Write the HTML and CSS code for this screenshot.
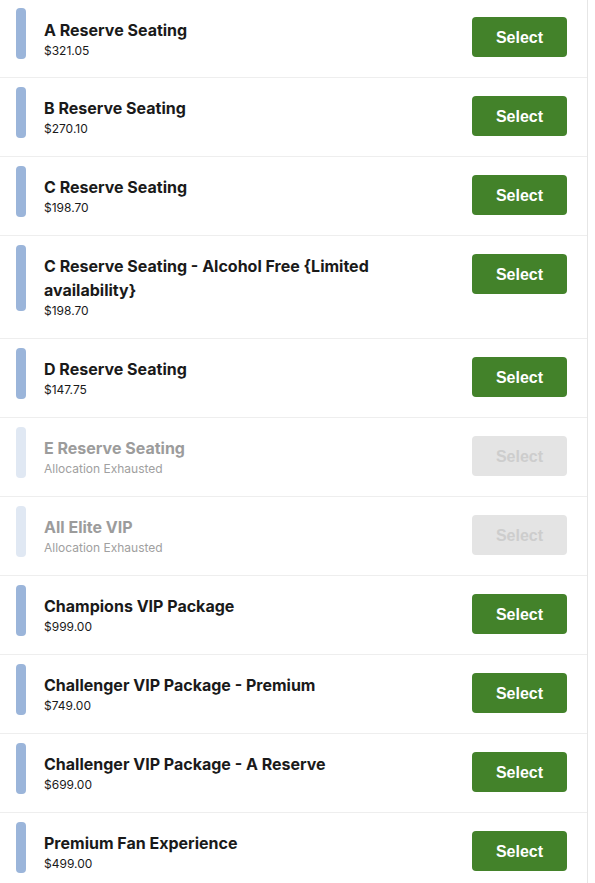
FILE: index.html
```html
<!DOCTYPE html>
<html>
<head>
<meta charset="utf-8">
<link rel="stylesheet" href="styles.css">
</head>
<body>
<div class="list">
  <div class="row">
    <div class="bar"></div>
    <div class="info"><div class="title">A Reserve Seating</div><div class="sub">$321.05</div></div>
    <button class="btn">Select</button>
  </div>
  <div class="row">
    <div class="bar"></div>
    <div class="info"><div class="title">B Reserve Seating</div><div class="sub">$270.10</div></div>
    <button class="btn">Select</button>
  </div>
  <div class="row">
    <div class="bar"></div>
    <div class="info"><div class="title">C Reserve Seating</div><div class="sub">$198.70</div></div>
    <button class="btn">Select</button>
  </div>
  <div class="row">
    <div class="bar bar-tall"></div>
    <div class="info"><div class="title">C Reserve Seating - Alcohol Free {Limited availability}</div><div class="sub">$198.70</div></div>
    <button class="btn">Select</button>
  </div>
  <div class="row">
    <div class="bar"></div>
    <div class="info"><div class="title">D Reserve Seating</div><div class="sub">$147.75</div></div>
    <button class="btn">Select</button>
  </div>
  <div class="row disabled">
    <div class="bar"></div>
    <div class="info"><div class="title">E Reserve Seating</div><div class="sub">Allocation Exhausted</div></div>
    <button class="btn" disabled>Select</button>
  </div>
  <div class="row disabled">
    <div class="bar"></div>
    <div class="info"><div class="title">All Elite VIP</div><div class="sub">Allocation Exhausted</div></div>
    <button class="btn" disabled>Select</button>
  </div>
  <div class="row">
    <div class="bar"></div>
    <div class="info"><div class="title">Champions VIP Package</div><div class="sub">$999.00</div></div>
    <button class="btn">Select</button>
  </div>
  <div class="row">
    <div class="bar"></div>
    <div class="info"><div class="title">Challenger VIP Package - Premium</div><div class="sub">$749.00</div></div>
    <button class="btn">Select</button>
  </div>
  <div class="row">
    <div class="bar"></div>
    <div class="info"><div class="title">Challenger VIP Package - A Reserve</div><div class="sub">$699.00</div></div>
    <button class="btn">Select</button>
  </div>
  <div class="row">
    <div class="bar"></div>
    <div class="info"><div class="title">Premium Fan Experience</div><div class="sub">$499.00</div></div>
    <button class="btn">Select</button>
  </div>
</div>
</body>
</html>
```
FILE: styles.css
```css
html, body {
  margin: 0;
  padding: 0;
  background: #ffffff;
}
body {
  font-family: Inter, "Liberation Sans", sans-serif;
  color: #1a1a1a;
}
.list {
  width: 587px;
  border-right: 1px solid #e6e6e6;
  min-height: 883px;
}
.row {
  display: flex;
  align-items: flex-start;
  padding: 9px 20px 18px 16px;
  border-bottom: 1px solid #eeeeee;
}
.row:first-child {
  padding-top: 8px;
  padding-bottom: 17px;
}
.bar {
  flex: none;
  width: 10px;
  height: 51px;
  border-radius: 4px;
  background: #9bb5da;
}
.bar-tall {
  height: 66px;
}
.info {
  flex: 1;
  margin: 9px 0 0 18px;
  padding-right: 90px;
}
.row:first-child .info {
  margin-top: 10px;
}
.title {
  font-size: 16px;
  line-height: 24px;
  font-weight: 700;
  color: #1a1a1a;
}
.sub {
  font-size: 12px;
  line-height: 18px;
  color: #1a1a1a;
}
.btn {
  flex: none;
  margin-top: 9px;
  width: 95px;
  height: 40px;
  border: none;
  border-radius: 4px;
  background: #43822a;
  color: #ffffff;
  font-family: "Liberation Sans", Arial, sans-serif;
  font-weight: 700;
  font-size: 16px;
  padding: 1px 0 0;
}
.disabled .bar {
  background: #e0e8f3;
}
.disabled .title {
  color: #9c9c9c;
}
.disabled .sub {
  color: #a0a0a0;
}
.disabled .btn {
  background: #e4e4e4;
  color: #cdcdcd;
}
```
